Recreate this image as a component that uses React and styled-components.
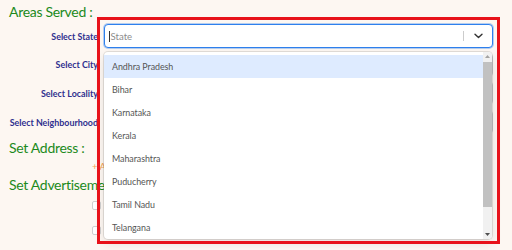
import React from "react";
import styled, { createGlobalStyle } from "styled-components";

const GlobalStyle = createGlobalStyle`
  html, body { margin: 0; padding: 0; background: #fdf7f2; }
  body { font-family: Lato, "Open Sans", sans-serif; overflow: hidden; }
  * { box-sizing: border-box; }
`;

const Page = styled.div`
  width: 512px;
  height: 250px;
  padding: 2px 19px 0 8px;
  background: #fdf7f2;
`;

const SectionTitle = styled.h2`
  margin: ${(p) => p.$mt || 0}px 0 0 1px;
  height: 20px;
  line-height: 20px;
  font-size: 14px;
  letter-spacing: -0.3px;
  font-weight: 400;
  color: #1c8a1c;
  white-space: nowrap;
`;

const FieldGrid = styled.div`
  margin-top: 2px;
  display: grid;
  grid-template-columns: 90px 389px;
  grid-auto-rows: 24px;
  column-gap: 6px;
  row-gap: 4.7px;
`;

const Label = styled.label`
  display: flex;
  align-items: center;
  justify-content: flex-end;
  font-size: 8.9px;
  font-weight: 700;
  color: #2f2f8e;
  white-space: nowrap;
`;

const SelectWrap = styled.div`
  position: relative;
  z-index: ${(p) => (p.$open ? 10 : 1)};
`;

const Control = styled.div`
  height: 24px;
  display: flex;
  align-items: center;
  background: #fff;
  border: 1px solid ${(p) => (p.$focused ? "#2f80ed" : "#cccccc")};
  box-shadow: ${(p) => (p.$focused ? "0 0 0 1px rgba(47,128,237,0.35)" : "none")};
  border-radius: 4px;
`;

const ValueArea = styled.div`
  flex: 1;
  display: flex;
  align-items: center;
  padding-left: 4px;
  font-size: 9.6px;
  color: #8c8c8c;
`;

const Caret = styled.span`
  display: inline-block;
  width: 1px;
  height: 11px;
  background: #333;
  margin-right: 0.5px;
`;

const Separator = styled.span`
  align-self: stretch;
  width: 1px;
  margin: 6px 0;
  background: #cccccc;
`;

const Indicator = styled.div`
  width: 28px;
  display: flex;
  align-items: center;
  justify-content: center;
  color: #333;
`;

const Highlight = styled.div`
  position: absolute;
  left: -7px;
  right: -7px;
  top: -7px;
  height: 227px;
  border: 3px solid #e8121a;
  pointer-events: none;
`;

const Menu = styled.div`
  position: absolute;
  left: 0;
  right: 1px;
  top: 28px;
  height: 187px;
  display: flex;
  background: #fff;
  border-radius: 4px;
  box-shadow: 0 0 0 1px rgba(0, 0, 0, 0.1), 0 4px 11px rgba(0, 0, 0, 0.1);
  overflow: hidden;
`;

const MenuList = styled.ul`
  flex: 1;
  list-style: none;
  margin: 0;
  padding: 3px 0 4px;
  overflow: hidden;
`;

const ScrollBar = styled.div`
  width: 9px;
  display: flex;
  flex-direction: column;
  background: #f1f1f1;
`;

const ScrollButton = styled.div`
  height: 9px;
  display: flex;
  align-items: center;
  justify-content: center;
  color: ${(p) => (p.$disabled ? "#a3a3a3" : "#505050")};
`;

const Thumb = styled.div`
  margin-top: 1px;
  height: 145px;
  background: #c1c1c1;
`;

const Spacer = styled.div`
  flex: 1;
`;

const Option = styled.li`
  height: 23px;
  line-height: 23px;
  padding: 0 8px;
  font-size: 8.9px;
  letter-spacing: -0.05px;
  color: #555;
  background: ${(p) => (p.$active ? "#deebff" : "transparent")};
  white-space: nowrap;
`;

const AddRow = styled.div`
  height: 17px;
  display: flex;
  align-items: center;
  padding-left: 84px;
`;

const AddButton = styled.span`
  font-size: 9.5px;
  color: #f4a251;
  white-space: nowrap;
`;

const CheckList = styled.div`
  display: flex;
  flex-direction: column;
  gap: 5px;
`;

const CheckRow = styled.div`
  height: 20px;
  display: flex;
  align-items: center;
  padding-left: 84px;
`;

const Box = styled.span`
  width: 9px;
  height: 9px;
  background: #fff;
  border: 1px solid #cfcfcf;
  border-radius: 2px;
`;

const Chevron = () => (
  <svg width="9" height="6" viewBox="0 0 9 6" fill="none">
    <path d="M1 1.2L4.5 4.6L8 1.2" stroke="currentColor" strokeWidth="1.4" strokeLinecap="round" strokeLinejoin="round" />
  </svg>
);

const Tri = ({ up }) => (
  <svg width="5" height="3" viewBox="0 0 5 3" fill="currentColor">
    <path d={up ? "M0 3L2.5 0L5 3Z" : "M0 0L5 0L2.5 3Z"} />
  </svg>
);

const states = [
  "Andhra Pradesh",
  "Bihar",
  "Karnataka",
  "Kerala",
  "Maharashtra",
  "Puducherry",
  "Tamil Nadu",
  "Telangana",
];

const fields = [
  { label: "Select State", placeholder: "State", open: true },
  { label: "Select City" },
  { label: "Select Locality" },
  { label: "Select Neighbourhood" },
];

function SelectField({ placeholder, open }) {
  return (
    <SelectWrap $open={open}>
      <Control $focused={open}>
        <ValueArea>
          {open && <Caret />}
          {placeholder}
        </ValueArea>
        <Separator />
        <Indicator>
          <Chevron />
        </Indicator>
      </Control>
      {open && (
        <>
          <Menu>
            <MenuList>
              {states.map((s, i) => (
                <Option key={s} $active={i === 0}>
                  {s}
                </Option>
              ))}
            </MenuList>
            <ScrollBar>
              <ScrollButton $disabled>
                <Tri up />
              </ScrollButton>
              <Thumb />
              <Spacer />
              <ScrollButton>
                <Tri />
              </ScrollButton>
            </ScrollBar>
          </Menu>
          <Highlight />
        </>
      )}
    </SelectWrap>
  );
}

export default function App() {
  return (
    <>
      <GlobalStyle />
      <Page>
        <SectionTitle>Areas Served :</SectionTitle>
        <FieldGrid>
          {fields.map((f) => (
            <React.Fragment key={f.label}>
              <Label>{f.label}</Label>
              <SelectField placeholder={f.placeholder} open={f.open} />
            </React.Fragment>
          ))}
        </FieldGrid>
        <SectionTitle $mt={4}>Set Address :</SectionTitle>
        <AddRow>
          <AddButton>+ Add Address</AddButton>
        </AddRow>
        <SectionTitle>Set Advertisement Preferences :</SectionTitle>
        <CheckList>
          <CheckRow>
            <Box />
          </CheckRow>
          <CheckRow>
            <Box />
          </CheckRow>
        </CheckList>
      </Page>
    </>
  );
}
